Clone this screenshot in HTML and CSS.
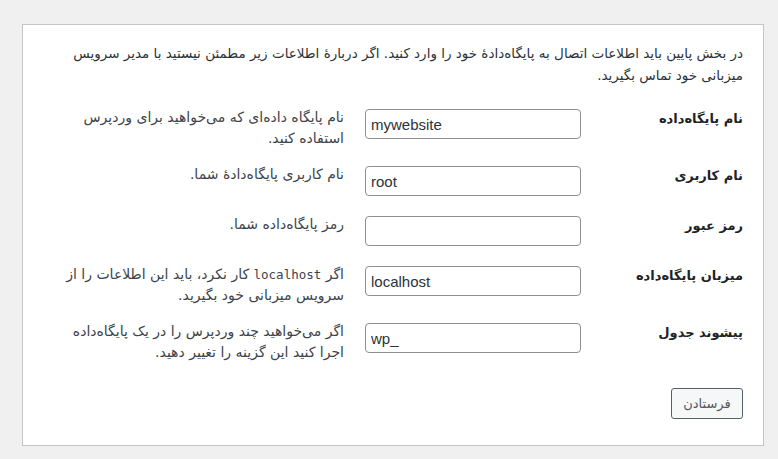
FILE: index.html
```html
<!DOCTYPE html>
<html lang="fa" dir="rtl">

<head>
  <meta charset="utf-8" />
  <title>وردپرس › فایل پیکربندی</title>
  <link rel="stylesheet" href="styles.css">
</head>

<body>
  <div class="card">
    <p class="intro">در بخش پایین باید اطلاعات اتصال به پایگاه‌دادهٔ خود را وارد کنید. اگر دربارهٔ اطلاعات زیر مطمئن نیستید با مدیر سرویس میزبانی خود تماس بگیرید.</p>

    <form class="setup" action="#">
      <div class="rows">
        <label class="lbl" for="dbname">نام پایگاه‌داده</label>
        <div class="field"><input id="dbname" type="text" value="mywebsite" /></div>
        <div class="desc">نام پایگاه داده‌ای که می‌خواهید برای وردپرس استفاده کنید.</div>

        <label class="lbl" for="uname">نام کاربری</label>
        <div class="field"><input id="uname" type="text" value="root" /></div>
        <div class="desc">نام کاربری پایگاه‌دادهٔ شما.</div>

        <label class="lbl" for="pwd">رمز عبور</label>
        <div class="field"><input id="pwd" type="text" value="" /></div>
        <div class="desc">رمز پایگاه‌داده شما.</div>

        <label class="lbl" for="dbhost">میزبان پایگاه‌داده</label>
        <div class="field"><input id="dbhost" type="text" value="localhost" /></div>
        <div class="desc">اگر <code>localhost</code> کار نکرد، باید این اطلاعات را از سرویس میزبانی خود بگیرید.</div>

        <label class="lbl" for="prefix">پیشوند جدول</label>
        <div class="field"><input id="prefix" type="text" value="wp_" /></div>
        <div class="desc">اگر می‌خواهید چند وردپرس را در یک پایگاه‌داده اجرا کنید این گزینه را تغییر دهید.</div>
      </div>

      <p class="step"><input type="button" class="button" value="فرستادن" /></p>
    </form>
  </div>
</body>

</html>
```

FILE: styles.css
```css
html {
  background-color: #f0f0f1;
}

body {
  margin: 0;
  padding: 24px 0 0 0;
  font-family: "DejaVu Sans", Tahoma, sans-serif;
  font-size: 14px;
  color: #3c434a;
}

.card {
  box-sizing: border-box;
  width: 742px;
  height: 422px;
  margin-right: 14px;
  padding: 17px 20px 0 20px;
  background-color: #fff;
  border: 1px solid #c3c4c7;
}

.intro {
  margin: 0;
  line-height: 22px;
  font-size: 13.5px;
  color: #2c3338;
  padding-left: 20px;
}

.rows {
  display: grid;
  grid-template-columns: 144px 216px 1fr;
  column-gap: 18px;
  row-gap: 15px;
  align-items: start;
  margin-top: 21px;
}

.lbl {
  font-weight: bold;
  font-size: 13px;
  line-height: 21px;
  color: #1d2327;
  padding-top: 1px;
}

.field {
  min-height: 35px;
}

.field input {
  display: block;
  box-sizing: border-box;
  width: 216px;
  height: 30px;
  margin: 2px 0 0 0;
  padding: 0 5px;
  direction: ltr;
  text-align: left;
  font-family: "Liberation Sans", sans-serif;
  font-size: 15px;
  color: #2c3338;
  background-color: #fff;
  border: 1px solid #8c8f94;
  border-radius: 4px;
}

.desc {
  padding-right: 3px;
  padding-left: 8px;
  font-size: 14px;
  line-height: 21px;
  color: #3c434a;
}

.desc code {
  font-family: "DejaVu Sans Mono", "Liberation Mono", monospace;
  font-size: 12.5px;
}

.step {
  margin: 25px 0 0 0;
}

.button {
  box-sizing: border-box;
  width: 72px;
  height: 31px;
  padding: 0;
  font-family: "DejaVu Sans", Tahoma, sans-serif;
  font-size: 13px;
  color: #50575e;
  background-color: #f6f7f7;
  border: 1px solid #50626f;
  border-radius: 3px;
}
```
